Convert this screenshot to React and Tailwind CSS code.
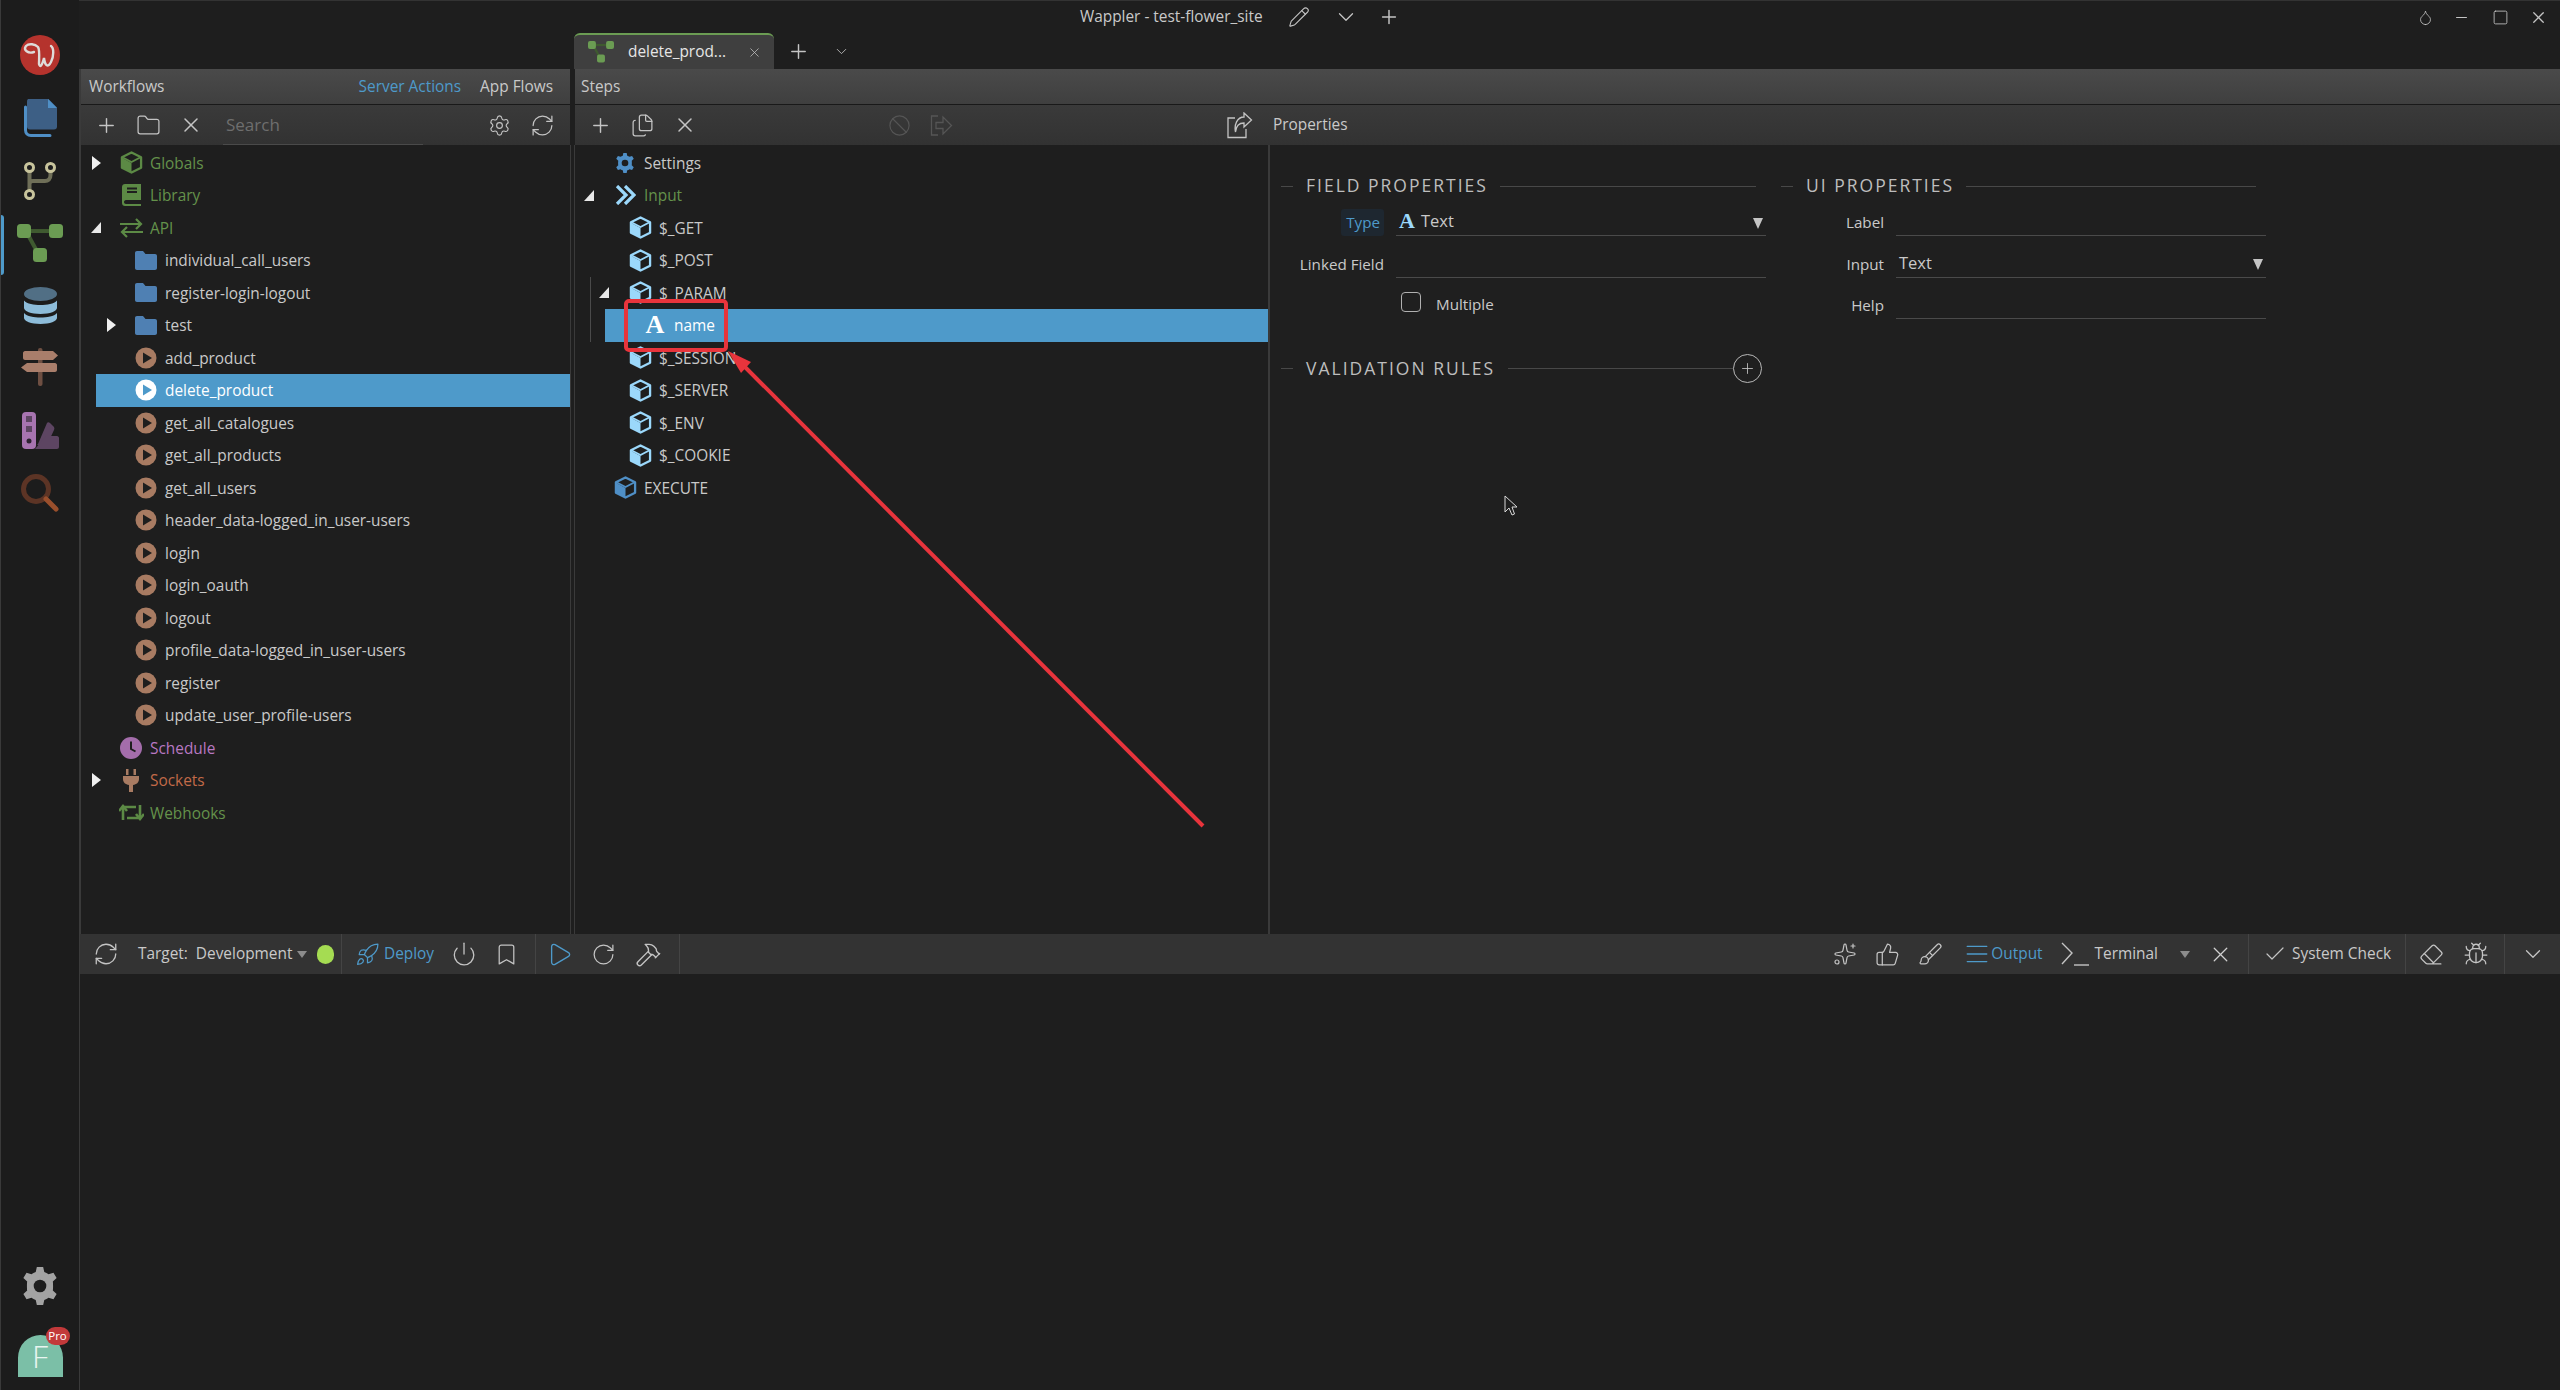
import {
  Plus, Folder, X, Settings, RefreshCw, Files, Ban, ChevronDown, Droplet, Minus, Square, Pencil,
  Rocket, Power, Bookmark, Play, RotateCw, Hammer, Sparkles, ThumbsUp, Brush, AlignJustify, Check, Eraser, Bug,
} from "lucide-react";

const FONT = "font-['Open_Sans',sans-serif]";

/* ---------- drawn icons ---------- */
const Cube = ({ color = "#9bd8fb", size = 23 }) => (
  <svg width={size} height={size} viewBox="0 0 24 24">
    <path d="M12 1.5 22 6.5V17.5L12 22.5 2 17.5V6.5Z" fill="none" stroke={color} strokeWidth="2.4" strokeLinejoin="round" />
    <path d="M2 7 12 12.5V22.5L2 17.5Z" fill={color} />
    <path d="M2.5 6.5 12 11.5 21.5 6.5" fill="none" stroke={color} strokeWidth="2" />
  </svg>
);

const FlowIcon = ({ size = 46, h = "#3f5a30" }) => (
  <svg width={size} height={size * 0.85} viewBox="0 0 46 39">
    <path d="M10 7H36" stroke={h} strokeWidth="4" />
    <path d="M10 9 22 31" stroke={h} strokeWidth="4" />
    <rect x="0" y="0" width="14" height="14" rx="3.5" fill="#6b9c53" />
    <rect x="32" y="0" width="14" height="14" rx="3.5" fill="#6b9c53" />
    <rect x="16" y="24" width="14" height="14" rx="3.5" fill="#6b9c53" />
  </svg>
);

const PlayCircle = ({ white }) => (
  <svg width="22" height="24" viewBox="0 0 22 24">
    <circle cx="11" cy="12" r="10.5" fill={white ? "#fff" : "#a87b62"} />
    <path d="M8 6.5 17 12 8 17.5Z" fill={white ? "#4e9aca" : "#1e1e1e"} />
  </svg>
);

const FolderFill = () => (
  <svg width="22" height="19" viewBox="0 0 22 19">
    <path d="M0 2C0 .8.8 0 2 0H8L10.5 3H20C21.2 3 22 3.8 22 5V17C22 18.2 21.2 19 20 19H2C.8 19 0 18.2 0 17Z" fill="#4f80b3" />
  </svg>
);

const Tri = ({ open }) =>
  open ? (
    <svg width="10" height="11" viewBox="0 0 10 11"><path d="M10 0V11H0Z" fill="#e8e8e8" /></svg>
  ) : (
    <svg width="9" height="14" viewBox="0 0 9 14"><path d="M0 0 9 7 0 14Z" fill="#f0f0f0" /></svg>
  );

const BookIcon = () => (
  <svg width="19" height="22" viewBox="0 0 19 22">
    <path d="M3 0H19V16H4C2.8 16 2 17 2 18S2.8 20 4 20H19V22H3C1.3 22 0 20.7 0 19V3C0 1.3 1.3 0 3 0Z" fill="#5c8a45" />
    <path d="M5 4.5H15M5 8H15" stroke="#1e1e1e" strokeWidth="2" />
    <path d="M4 17.5H19V19.5H4Z" fill="#1e1e1e" />
  </svg>
);

const ApiIcon = () => (
  <svg width="23" height="20" viewBox="0 0 23 20" fill="none" stroke="#5c8a45" strokeWidth="2.2">
    <path d="M0 6H21M16 1 21 6 16 11" />
    <path d="M23 14H2M7 9 2 14 7 19" />
  </svg>
);

const ClockIcon = () => (
  <svg width="22" height="22" viewBox="0 0 22 22">
    <circle cx="11" cy="11" r="11" fill="#a46dab" />
    <path d="M11 4.5V12L15.5 14.5" fill="none" stroke="#1e1e1e" strokeWidth="2" />
  </svg>
);

const PlugIcon = () => (
  <svg width="18" height="23" viewBox="0 0 18 23">
    <path d="M4 0H6.5V6H4ZM11.5 0H14V6H11.5Z" fill="#a87b62" />
    <path d="M1 7H17V10C17 13.5 14.5 15.5 11 16V23H7V16C3.5 15.5 1 13.5 1 10Z" fill="#a87b62" />
  </svg>
);

const WebhookIcon = () => (
  <svg width="25" height="19" viewBox="0 0 25 19" fill="none" stroke="#5c8a45" strokeWidth="2.6">
    <path d="M4 17V4H17" />
    <path d="M0 8 4 3 8 8" />
    <path d="M21 2V15H8" />
    <path d="M17 11 21 16 25 11" />
  </svg>
);

const GearFill = ({ color, size }) => (
  <svg width={size} height={size} viewBox="0 0 24 24">
    <path
      d="M10 0H14L14.7 3.2C15.7 3.5 16.6 4 17.4 4.6L20.5 3.6 22.5 7 20.1 9.2C20.3 10.2 20.3 13.8 20.1 14.8L22.5 17 20.5 20.4 17.4 19.4C16.6 20 15.7 20.5 14.7 20.8L14 24H10L9.3 20.8C8.3 20.5 7.4 20 6.6 19.4L3.5 20.4 1.5 17 3.9 14.8C3.7 13.8 3.7 10.2 3.9 9.2L1.5 7 3.5 3.6 6.6 4.6C7.4 4 8.3 3.5 9.3 3.2Z"
      fill={color}
    />
    <circle cx="12" cy="12" r="4" fill="#1e1e1e" />
  </svg>
);

const ChevronsBlue = () => (
  <svg width="21" height="20" viewBox="0 0 21 20" fill="none" stroke="#9bd8fb" strokeWidth="3.2">
    <path d="M2 1 11 10 2 19" />
    <path d="M10 1 19 10 10 19" />
  </svg>
);

const LetterA = ({ color = "#fff", size = 21 }) => (
  <span className={`font-['Liberation_Serif',serif] font-bold leading-none`} style={{ color, fontSize: size }}>A</span>
);

const ShareBox = () => (
  <svg width="27" height="27" viewBox="0 0 27 27" fill="none" stroke="#c4c4c4" strokeWidth="1.3" className="shrink-0">
    <path d="M9 6H2V25.500H20V17" />
    <path d="M18 1 25.500 8 18 15V11C13 11 10 14 9.500 20 8 13 11 5 18 5Z" />
  </svg>
);

const ExitBox = () => (
  <svg width="23" height="23" viewBox="0 0 23 23" fill="none" stroke="#555555" strokeWidth="1.3" className="shrink-0 ml-[19px]">
    <path d="M8 2H1.500V21H8" />
    <path d="M6 8.500H13V3L21.500 11.500 13 20V14.500H6Z" />
  </svg>
);

/* ---------- left rail ---------- */
const Logo = () => (
  <svg width="40" height="40" viewBox="0 0 40 40">
    <circle cx="20" cy="20" r="20" fill="#b5332d" />
    <path
      d="M14 17C8 19 3 15 6 11 9 8 15 9 18 12 20 15 19 24 19 29 20 33 22 31 24 23 25 31 28 33 31 27 34 21 34 13 31 11"
      fill="none"
      stroke="#dedbd9"
      strokeWidth="2.4"
      strokeLinecap="round"
    />
  </svg>
);

const Rail = () => (
  <aside className="w-[79px] h-full shrink-0 flex flex-col items-center border-l-[1px] border-[#3a3a3a] bg-[#1c1c1c] relative">
    <div className="mt-[35px] mb-[24px]"><Logo /></div>
    <svg width="33" height="38" viewBox="0 0 33 38" className="mb-[25px]">
      <path d="M6 0H24L33 9V28C33 30 32 31 30 31H6C4 31 3 30 3 28V3C3 1 4 0 6 0Z" transform="translate(0 -.5)" fill="#3d5f85" />
      <path d="M24 0 33 9H24Z" fill="#4f8fc6" />
      <path d="M1.5 8V31C1.5 34 3.5 36.5 7 36.5H26" fill="none" stroke="#4f8fc6" strokeWidth="3" strokeLinecap="round" />
    </svg>
    <svg width="32" height="38" viewBox="0 0 32 38" className="mb-[24px]">
      <path d="M5.5 8V32M26.5 8V13C26.5 17 24 19 21 19H9C7 19 5.5 20 5.5 22" fill="none" stroke="#6f6f58" strokeWidth="4" />
      <circle cx="5.5" cy="5.5" r="4" fill="#1c1c1c" stroke="#c8c49c" strokeWidth="3" />
      <circle cx="26.5" cy="5.5" r="4" fill="#1c1c1c" stroke="#c8c49c" strokeWidth="3" />
      <circle cx="5.5" cy="32.5" r="4" fill="#1c1c1c" stroke="#c8c49c" strokeWidth="3" />
    </svg>
    <div className="mb-[24px]"><FlowIcon /></div>
    <svg width="33" height="38" viewBox="0 0 33 38" className="mb-[23px]">
      <ellipse cx="16.5" cy="7" rx="16.5" ry="7" fill="#516f85" />
      <path d="M0 13.5C3 17 10 18 16.5 18S30 17 33 13.5V21C33 24 26 27 16.5 27S0 24 0 21Z" fill="#8dbcd9" />
      <path d="M0 26C3 29.5 10 30.5 16.5 30.5S30 29.500 33 26V31C33 34 26 37 16.5 37S0 34 0 31Z" fill="#8dbcd9" />
    </svg>
    <svg width="38" height="38" viewBox="0 0 38 38" className="mb-[26px]">
      <rect x="17" y="0" width="4.500" height="38" rx="2" fill="#6e4f42" />
      <path d="M4 3H32L37 7.500 32 12H4C3 12 2 11 2 10V5C2 4 3 3 4 3Z" fill="#a97e6b" />
      <path d="M6 15H34C35 15 36 16 36 17V22C36 23 35 24 34 24H6L0 19.500Z" fill="#a97e6b" />
    </svg>
    <svg width="38" height="38" viewBox="0 0 38 38" className="mb-[24px]">
      <path d="M17 32 26 11C26.500 10 28 10 29 11L33 15C33.500 16 33.500 17 33 18L26 33H16Z" fill="#5d4562" />
      <path d="M14 37 25 24H36C37 24 38 25 38 26V35C38 36 37 37 36 37Z" fill="#5d4562" />
      <rect x="1" y="0" width="14" height="37" rx="4" fill="#a774b0" />
      <rect x="5" y="4" width="6" height="6" fill="#5d4562" />
      <rect x="5" y="14" width="6" height="6" fill="#5d4562" />
      <circle cx="8" cy="29" r="2.500" fill="#2c2230" />
    </svg>
    <svg width="38" height="38" viewBox="0 0 38 38">
      <circle cx="15" cy="15" r="12.500" fill="none" stroke="#5c3425" strokeWidth="5" />
      <path d="M25 25 35 35" stroke="#9a4f2c" strokeWidth="5" strokeLinecap="round" />
    </svg>
    <span className="absolute left-0 top-[215px] w-[3px] h-[60px] bg-[#4e9aca] rounded-r-[3px]" />
    <div className="mt-auto mb-[13px] flex flex-col items-center">
      <GearFill color="#a3a3a3" size={38} />
      <div className="relative mt-[30px] w-[45px] h-[42px] rounded-t-full rounded-b-[22px] bg-[#7bbfa7] flex items-center justify-center text-[#e8f5f0] text-[32px] font-light leading-none overflow-visible">
        <span>F</span>
        <span className="absolute left-[28px] top-[-8px] w-[24px] h-[18px] rounded-full bg-[#c2393a] text-white text-[11.5px] font-normal leading-[18px] text-center">Pro</span>
      </div>
    </div>
  </aside>
);

/* ---------- tree ---------- */
const Row = ({ icon, label, color = "text-[#c9c9c9]", caret, open, sel, outer = "", pad = "pl-[9px]", gapA = "ml-[15px]", slot = "w-[28px]", gapB = "ml-[5px]" }) => (
  <div className={`h-[32.5px] flex items-center whitespace-nowrap ${outer} ${sel ? "bg-[#4e9aca]" : ""}`}>
    <div className={pad} />
    <div className="w-[12px] flex justify-center">{caret ? <Tri open={open} /> : null}</div>
    <div className={`${gapA} ${slot} flex justify-center items-center`}>{icon}</div>
    <span className={`${gapB} ${sel ? "text-white" : color} text-[15.4px] leading-none pt-[1px]`}>{label}</span>
  </div>
);

const flows = ["add_product", "delete_product", "get_all_catalogues", "get_all_products", "get_all_users", "header_data-logged_in_user-users", "login", "login_oauth", "logout", "profile_data-logged_in_user-users", "register", "update_user_profile-users"];

const WorkflowTree = () => (
  <div className="pt-[1.5px]">
    <Row icon={<Cube color="#5c8a45" />} label="Globals" color="text-[#64924b]" caret />
    <Row icon={<BookIcon />} label="Library" color="text-[#64924b]" />
    <Row icon={<ApiIcon />} label="API" color="text-[#64924b]" caret open />
    <Row outer="ml-[15px]" icon={<FolderFill />} label="individual_call_users" />
    <Row outer="ml-[15px]" icon={<FolderFill />} label="register-login-logout" />
    <Row outer="ml-[15px]" icon={<FolderFill />} label="test" caret />
    {flows.map((f) => (
      <Row key={f} outer="ml-[15px]" icon={<PlayCircle white={f === "delete_product"} />} label={f} sel={f === "delete_product"} />
    ))}
    <Row icon={<ClockIcon />} label="Schedule" color="text-[#b878c2]" />
    <Row icon={<PlugIcon />} label="Sockets" color="text-[#c26a48]" caret />
    <Row icon={<WebhookIcon />} label="Webhooks" color="text-[#64924b]" />
  </div>
);

const stepProps = { pad: "pl-[8px]", gapA: "ml-[18px]", slot: "w-[24px]", gapB: "ml-[7px]" };

const StepsTree = () => (
  <div className="pt-[1.5px]">
    <Row {...stepProps} icon={<GearFill color="#4f8fc6" size={20} />} label="Settings" />
    <Row {...stepProps} icon={<ChevronsBlue />} label="Input" color="text-[#64924b]" caret open />
    <Row {...stepProps} outer="ml-[15px]" icon={<Cube />} label="$_GET" />
    <Row {...stepProps} outer="ml-[15px]" icon={<Cube />} label="$_POST" />
    <div className="ml-[15px] border-l border-[#4a4a4a]">
      <Row {...stepProps} pad="pl-[7px]" icon={<Cube />} label="$_PARAM" caret open />
      <Row {...stepProps} outer="ml-[14px]" icon={<LetterA size={26} />} label="name" sel />
    </div>
    <Row {...stepProps} outer="ml-[15px]" icon={<Cube />} label="$_SESSION" />
    <Row {...stepProps} outer="ml-[15px]" icon={<Cube />} label="$_SERVER" />
    <Row {...stepProps} outer="ml-[15px]" icon={<Cube />} label="$_ENV" />
    <Row {...stepProps} outer="ml-[15px]" icon={<Cube />} label="$_COOKIE" />
    <Row {...stepProps} icon={<Cube color="#4f8fc6" />} label="EXECUTE" />
  </div>
);

/* ---------- properties ---------- */
const Legend = ({ title, lineW, endW }) => (
  <div className="flex items-center h-[24px]">
    <span className="w-[12px] h-[1px] bg-[#484848]" />
    <span className={`ml-[13px] text-[17.5px] tracking-[2px] text-[#bdbdbd] leading-none whitespace-nowrap ${lineW}`}>{title}</span>
    <span className={`h-[1px] bg-[#484848] ${endW}`} />
  </div>
);

const Field = ({ label, sel, children, labelCls = "text-[#c9c9c9] mb-[3px]" }) => (
  <div className="h-[41.5px] flex items-end">
    <span className={`w-[104px] text-right text-[15.2px] leading-[22px] pr-[1px] whitespace-nowrap ${labelCls}`}>{label}</span>
    <div className="ml-[11px] w-[370px] h-[41.5px] border-b border-[#4a4a4a] flex items-end pb-[3px] pl-[3px] relative">
      {children}
      {sel ? <svg width="10" height="11" viewBox="0 0 10 11" className="absolute right-[3px] top-[23px]"><path d="M0 0H10L5 11Z" fill="#c4c4c4" /></svg> : null}
    </div>
  </div>
);

const Properties = () => (
  <div className="flex-1 pl-[11px] pt-[29px] bg-[#1f1f1f] border-l-2 border-[#3a3a3a]">
    <div className="flex">
      <div className="w-[500px]">
        <Legend title="FIELD PROPERTIES" lineW="w-[194px]" endW="w-[256px]" />
        <div className="-mt-[3.5px]">
          <Field labelCls="" label={<span className="inline-block bg-[#1e2730] rounded-[3px] pl-[5px] pr-[4px] leading-[27px] text-[#4e9aca]">Type</span>} sel>
            <span className="flex items-center gap-[6px] text-[#c9c9c9] text-[16.5px] leading-[22px]"><LetterA color="#9bd8fb" size={22} />Text</span>
          </Field>
          <Field label="Linked Field" />
          <div className="flex items-center h-[41px] ml-[120px]">
            <span className="w-[20px] h-[20px] rounded-[4px] border border-[#b0b0b0] mt-[7px]" />
            <span className="ml-[15px] text-[15.2px] text-[#c9c9c9] mt-[13px]">Multiple</span>
          </div>
        </div>
      </div>
      <div className="w-[500px]">
        <Legend title="UI PROPERTIES" lineW="w-[160px]" endW="w-[290px]" />
        <div className="-mt-[3.5px]">
          <Field label="Label" />
          <Field label="Input" sel>
            <span className="text-[#c9c9c9] text-[16.5px] leading-[22px]">Text</span>
          </Field>
          <Field label="Help" />
        </div>
      </div>
    </div>
    <div className="mt-[35px] w-[500px] h-[29px] flex items-center">
      <Legend title="VALIDATION RULES" lineW="w-[202px]" endW="w-[225px]" />
      <span className="w-[29px] h-[29px] rounded-full border border-[#b8b8b8] flex items-center justify-center"><Plus size={17} strokeWidth={1.2} color="#c4c4c4" /></span>
    </div>
  </div>
);

/* ---------- bars ---------- */
const Ic = ({ as: I, size = 24, c = "#c4c4c4", sw = 1.2, cls = "" }) => <I size={size} color={c} strokeWidth={sw} className={`shrink-0 ${cls}`} />;

const TermIcon = () => (
  <svg width="28" height="26" viewBox="0 0 28 26" fill="none" stroke="#c4c4c4" strokeWidth="1.4">
    <path d="M1 2 11 12 1 23" />
    <path d="M13 24H28" />
  </svg>
);

const Caret = ({ cls = "" }) => (
  <svg width="10" height="7" viewBox="0 0 10 7" className={cls}><path d="M0 0H10L5 7Z" fill="#8c8c8c" /></svg>
);

const BottomBar = () => (
  <div className="h-[40px] flex items-stretch bg-[#333333] text-[15.4px] text-[#c9c9c9] border-l border-[#3a3a3a]">
    <div className="w-[262px] flex items-center border-r border-[#444444] pl-[13px] whitespace-nowrap">
      <Ic as={RefreshCw} size={26} />
      <span className="ml-[19px]">Target:</span>
      <span className="ml-[8px]">Development</span>
      <Caret cls="ml-[5px]" />
      <span className="ml-[10px] w-[17px] h-[19px] rounded-full bg-[#a5dc52]" />
    </div>
    <div className="w-[194px] flex items-center border-r border-[#444444] pl-[13px]">
      <Ic as={Rocket} size={25} c="#4e9aca" />
      <span className="ml-[4px] text-[#4e9aca]">Deploy</span>
      <Ic as={Power} size={26} cls="ml-[17px]" />
      <Ic as={Bookmark} size={25} cls="ml-[17px]" />
    </div>
    <div className="w-[144px] flex items-center border-r border-[#444444] pl-[10px]">
      <Ic as={Play} size={27} c="#4e9aca" />
      <Ic as={RotateCw} size={25} cls="ml-[18px]" />
      <Ic as={Hammer} size={27} cls="ml-[19px]" />
    </div>
    <div className="flex-1 flex items-center justify-end border-r border-[#444444] pr-[15px] whitespace-nowrap">
      <Ic as={Sparkles} size={24} />
      <Ic as={ThumbsUp} size={25} cls="ml-[18px]" />
      <Ic as={Brush} size={25} cls="ml-[18px]" />
      <Ic as={AlignJustify} size={26} c="#4e9aca" cls="ml-[21px]" />
      <span className="ml-[1px] text-[#4e9aca]">Output</span>
      <span className="ml-[18px]"><TermIcon /></span>
      <span className="ml-[6px]">Terminal</span>
      <Caret cls="ml-[22px]" />
      <Ic as={X} size={25} c="#d0d0d0" cls="ml-[18px]" />
    </div>
    <div className="w-[157px] flex items-center border-r border-[#444444] pl-[14px]">
      <Ic as={Check} size={24} />
      <span className="ml-[5px] whitespace-nowrap">System Check</span>
    </div>
    <div className="w-[99px] flex items-center border-r border-[#444444] pl-[13px]">
      <Ic as={Eraser} size={25} />
      <Ic as={Bug} size={26} cls="ml-[19px]" />
    </div>
    <div className="w-[55px] flex items-center justify-center"><Ic as={ChevronDown} size={26} /></div>
  </div>
);

const TitleBar = () => (
  <div className="h-[33px] flex items-center border-t border-[#333333] text-[15.4px] text-[#c9c9c9]">
    <span className="ml-[1001px] whitespace-nowrap">Wappler - test-flower_site</span>
    <Ic as={Pencil} size={22} cls="ml-[25px]" />
    <Ic as={ChevronDown} size={26} cls="ml-[23px]" />
    <Ic as={Plus} size={22} sw={1.6} cls="ml-[19px]" />
    <Ic as={Droplet} size={17} cls="ml-[1017px]" />
    <Ic as={Minus} size={17} sw={1.6} cls="ml-[19px]" />
    <Ic as={Square} size={17} cls="ml-[22px]" />
    <Ic as={X} size={19} sw={1.6} cls="ml-[20px]" />
  </div>
);

const TabRow = () => (
  <div className="h-[36px] flex items-stretch pl-[495px]">
    <div className="w-[200px] bg-[#3f3f3f] border-t-[2px] border-[#6b9c53] rounded-t-[6px] flex items-center pl-[14px] text-[15.4px] text-[#e6e6e6] whitespace-nowrap">
      <FlowIcon size={26} />
      <span className="ml-[14px]">delete_prod...</span>
      <Ic as={X} size={15} cls="ml-[21px]" />
    </div>
    <div className="flex items-center ml-[13px]">
      <Ic as={Plus} size={23} sw={1.5} />
      <Ic as={ChevronDown} size={17} cls="ml-[23px]" />
    </div>
  </div>
);

const Annotation = () => (
  <>
    <div className="absolute left-[624px] top-[299px] w-[104px] h-[53px] border-[4px] border-[#e8343c] rounded-[5px]" />
    <svg width="2560" height="1390" viewBox="0 0 2560 1390" className="absolute left-0 top-0 pointer-events-none">
      <path d="M1203 826 742 364" stroke="#e8343c" strokeWidth="4" />
      <path d="M728 351 751 362 741 373Z" fill="#e8343c" />
      <path d="M1505 496V512L1509 508 1512 515 1514.500 514 1512 507H1517Z" fill="#1e1e1e" stroke="#d8d8d8" strokeWidth="1" />
    </svg>
  </>
);

export default function App() {
  return (
    <div className={`relative w-[2560px] h-[1390px] overflow-hidden flex bg-[#1e1e1e] ${FONT}`}>
      <Rail />
      <div className="flex-1 flex flex-col min-w-0 h-full">
        <TitleBar />
        <TabRow />
        <div className="h-[865px] flex">
          {/* workflows panel */}
          <section className="w-[491px] shrink-0 flex flex-col border-l-2 border-[#3a3a3a]">
            <div className="h-[35px] bg-gradient-to-b from-[#4a4a4a] to-[#3f3f3f] flex items-center pl-[8px] text-[15.4px] text-[#c9c9c9] whitespace-nowrap">
              <span>Workflows</span>
              <span className="ml-auto text-[#4e9aca]">Server Actions</span>
              <span className="ml-[19px] mr-[17px]">App Flows</span>
            </div>
            <div className="h-[41px] border-t border-[#191919] bg-gradient-to-b from-[#3a3a3a] to-[#323232] flex items-center pl-[14px]">
              <Ic as={Plus} size={23} sw={1.5} />
              <Ic as={Folder} size={25} cls="ml-[18px]" />
              <Ic as={X} size={24} sw={1.5} cls="ml-[18px]" />
              <div className="ml-[20px] w-[200px] h-[40px] border-b border-[#4a4a4a] flex items-center pl-[3px] text-[17px] text-[#6e6e6e]">Search</div>
              <Ic as={Settings} size={23} cls="ml-[65px]" />
              <Ic as={RefreshCw} size={25} cls="ml-[19px]" />
            </div>
            <WorkflowTree />
          </section>
          <div className="w-[5px] shrink-0 mt-[76px] border-x border-[#3a3a3a]" />
          {/* steps + properties */}
          <section className="flex-1 flex flex-col min-w-0">
            <div className="h-[35px] bg-gradient-to-b from-[#4a4a4a] to-[#3f3f3f] flex items-center pl-[6px] text-[15.4px] text-[#c9c9c9]">Steps</div>
            <div className="flex-1 flex border-t border-[#191919] min-h-0">
              <div className="w-[693px] shrink-0 flex flex-col">
                <div className="h-[40px] bg-gradient-to-b from-[#3a3a3a] to-[#323232] flex items-center pl-[14px]">
                  <Ic as={Plus} size={23} sw={1.5} />
                  <Ic as={Files} size={25} cls="ml-[18px]" />
                  <Ic as={X} size={24} sw={1.5} cls="ml-[18px]" />
                  <Ic as={Ban} size={23} c="#555555" cls="ml-[191px]" />
                  <ExitBox />
                  <span className="ml-[273px]"><ShareBox /></span>
                </div>
                <StepsTree />
              </div>
              <div className="flex-1 flex flex-col min-w-0">
                <div className="h-[40px] bg-gradient-to-b from-[#3a3a3a] to-[#323232] flex items-center pl-[5px] text-[15.4px] text-[#c9c9c9]">Properties</div>
                <Properties />
              </div>
            </div>
          </section>
        </div>
        <BottomBar />
        <div className="flex-1 bg-[#1e1e1e] border-l border-[#3a3a3a]" />
      </div>
      <Annotation />
    </div>
  );
}
